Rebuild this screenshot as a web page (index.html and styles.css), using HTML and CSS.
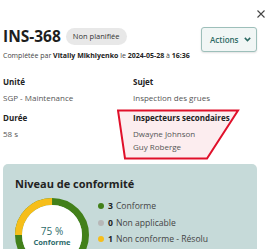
FILE: index.html
```html
<!DOCTYPE html>
<html lang="fr">
<head>
    <meta charset="UTF-8">
    <meta name="viewport" content="width=device-width, initial-scale=1.0">
    <title>INS-368</title>
    <link rel="stylesheet" href="styles.css">
</head>
<body>
    <div class="page">
        <div class="topbar">
            <button class="close" aria-label="Fermer">
                <svg width="8" height="8" viewBox="0 0 8 8"><path d="M0.5 0.5L7.5 7.5M7.5 0.5L0.5 7.5" stroke="#444" stroke-width="1.1" fill="none"/></svg>
            </button>
        </div>
        <div class="content">
            <div class="header">
                <div class="heading">
                    <div class="title-line">
                        <h1>INS-368</h1>
                        <span class="badge">Non planifiée</span>
                    </div>
                    <p class="meta">Complétée par <b>Vitaliy Mikhiyenko</b> le <b>2024-05-28</b> à <b>16:36</b></p>
                </div>
                <button class="actions">Actions
                    <svg width="7" height="5" viewBox="0 0 7 5"><path d="M0.8 0.9L3.5 3.6L6.2 0.9" stroke="#2d6a63" stroke-width="1.5" fill="none"/></svg>
                </button>
            </div>

            <div class="fields">
                <div class="field">
                    <div class="label">Unité</div>
                    <div class="value">SGP - Maintenance</div>
                </div>
                <div class="field">
                    <div class="label">Sujet</div>
                    <div class="value">Inspection des grues</div>
                </div>
                <div class="field">
                    <div class="label">Durée</div>
                    <div class="value">58 s</div>
                </div>
                <div class="field highlighted">
                    <svg class="mark" width="124" height="52" viewBox="0 0 124 52"><polygon points="1,1.5 121,1.5 90,49.5 8,49.5" fill="#fcedef" stroke="#e0102a" stroke-width="2"/></svg>
                    <div class="label">Inspecteurs secondaires</div>
                    <div class="value">Dwayne Johnson</div>
                    <div class="value">Guy Roberge</div>
                </div>
            </div>

            <div class="card">
                <h2>Niveau de conformité</h2>
                <div class="card-body">
                    <div class="donut">
                        <svg width="74" height="74" viewBox="0 0 74 74">
                            <circle cx="37" cy="37" r="33.5" fill="none" stroke="#42801a" stroke-width="7"/>
                            <circle cx="37" cy="37" r="33.5" fill="none" stroke="#f6be1a" stroke-width="7" stroke-dasharray="52.6 300" transform="rotate(180 37 37)"/>
                            <circle cx="37" cy="37" r="30" fill="#fff"/>
                        </svg>
                        <div class="donut-text">
                            <span class="pct">75 %</span>
                            <span class="pct-label">Conforme</span>
                        </div>
                    </div>
                    <ul class="legend">
                        <li><span class="dot green"></span><b>3</b> Conforme</li>
                        <li><span class="dot gray"></span><b>0</b> Non applicable</li>
                        <li><span class="dot yellow"></span><b>1</b> Non conforme - Résolu</li>
                    </ul>
                </div>
            </div>
        </div>
    </div>
</body>
</html>
```

FILE: styles.css
```css
body {
    margin: 0;
    background-color: #fff;
    font-family: "Open Sans", "Liberation Sans", sans-serif;
    color: #222;
    overflow: hidden;
}
.page {
    padding: 0 3px;
}
.topbar {
    display: flex;
    justify-content: flex-end;
    height: 27px;
}
.close {
    margin-top: 10px;
    padding: 0;
    width: 8px;
    height: 8px;
    border: none;
    background: none;
    cursor: pointer;
}
.close svg {
    display: block;
}
.content {
    padding-right: 8px;
}
.header {
    display: flex;
    justify-content: space-between;
    align-items: flex-start;
}
.title-line {
    display: flex;
    align-items: center;
    height: 18px;
}
h1 {
    margin: 0;
    font-size: 15.5px;
    line-height: 18px;
    font-weight: 700;
    color: #1e1e1e;
}
.badge {
    margin-left: 5px;
    height: 17px;
    padding: 0 7px;
    border-radius: 9px;
    background-color: #e8e8e8;
    color: #333;
    font-size: 7.5px;
    line-height: 17px;
}
.meta {
    margin: 6px 0 0;
    font-size: 7px;
    line-height: 9px;
    color: #444;
    white-space: nowrap;
}
.meta b {
    color: #222;
}
.actions {
    display: flex;
    align-items: center;
    gap: 5px;
    height: 25px;
    width: 56px;
    padding: 0 0 0 8px;
    border: 1px solid #9dbfba;
    border-radius: 3px;
    background-color: #f1f6f5;
    box-shadow: 0 1px 2px rgba(0,0,0,0.12);
    color: #2d6a63;
    font-family: inherit;
    font-size: 8px;
    font-weight: 600;
    cursor: pointer;
}
.fields {
    display: grid;
    grid-template-columns: 130px 1fr;
    row-gap: 7px;
    margin-top: 15px;
}
.field {
    position: relative;
}
.label {
    position: relative;
    font-size: 8px;
    line-height: 13px;
    font-weight: 700;
    color: #222;
    margin-bottom: 3px;
}
.value {
    position: relative;
    font-size: 8px;
    line-height: 13px;
    color: #555;
}
.mark {
    position: absolute;
    left: -16px;
    top: -2px;
}
.card {
    margin-top: 11px;
    padding: 12px 12px 20px;
    border-radius: 5px;
    background-color: #c6dad9;
}
h2 {
    margin: 0;
    font-size: 11px;
    line-height: 16px;
    font-weight: 700;
    color: #222;
}
.card-body {
    display: flex;
    align-items: flex-start;
    margin-top: 6px;
}
.donut {
    position: relative;
    width: 74px;
    height: 74px;
}
.donut svg {
    display: block;
}
.donut-text {
    position: absolute;
    inset: 0;
    display: flex;
    flex-direction: column;
    align-items: center;
    justify-content: center;
    gap: 1px;
    padding-top: 3px;
}
.pct {
    font-size: 10px;
    line-height: 11px;
    color: #2e6b6b;
}
.pct-label {
    font-size: 7.5px;
    line-height: 9px;
    font-weight: 700;
    color: #2e6b6b;
}
.legend {
    list-style: none;
    margin: 0 0 0 9px;
    padding: 0;
}
.legend li {
    display: flex;
    align-items: center;
    font-size: 8.6px;
    line-height: 16.5px;
    color: #444;
    white-space: nowrap;
}
.legend b {
    margin-right: 3px;
    color: #222;
}
.dot {
    width: 6px;
    height: 6px;
    border-radius: 50%;
    margin-right: 4px;
}
.green {
    background-color: #42801a;
}
.gray {
    background-color: #b7b7b7;
}
.yellow {
    background-color: #f6be1a;
}
```
